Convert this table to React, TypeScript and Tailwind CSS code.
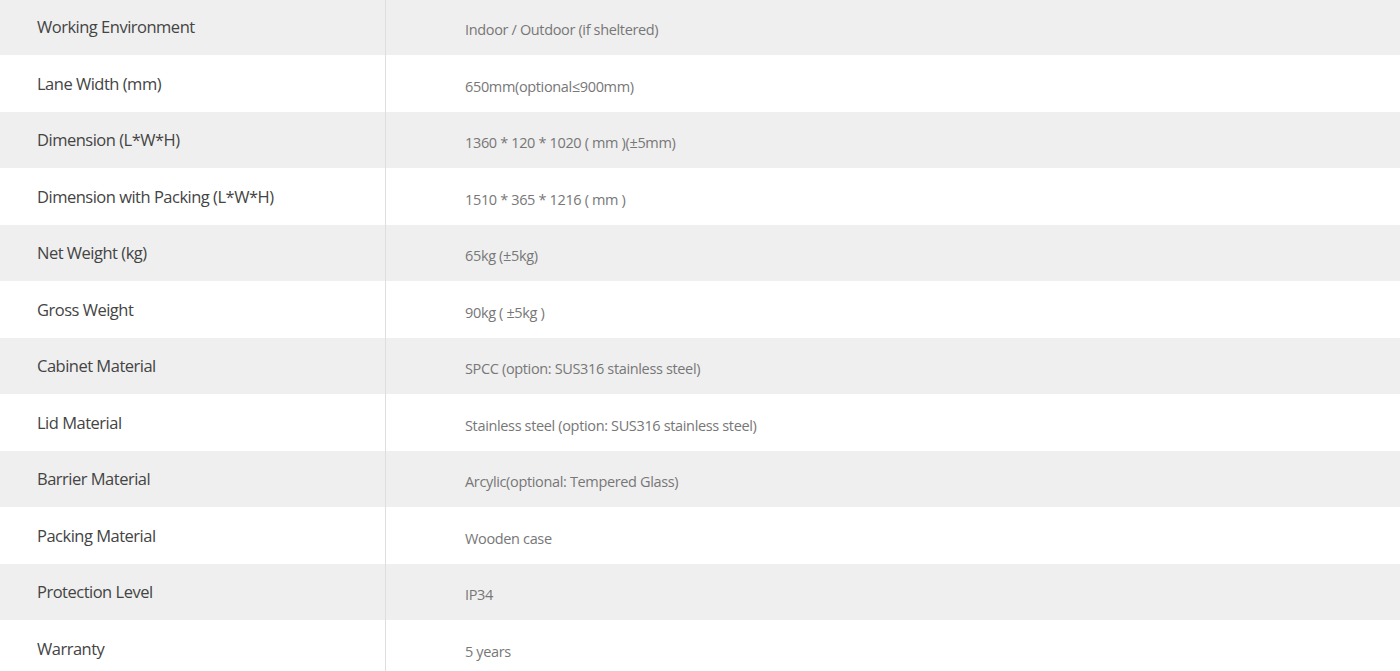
const specs = [
  ['Working Environment', 'Indoor / Outdoor (if sheltered)'],
  ['Lane Width (mm)', '650mm(optional≤900mm)'],
  ['Dimension (L*W*H)', '1360 * 120 * 1020 ( mm )(±5mm)'],
  ['Dimension with Packing (L*W*H)', '1510 * 365 * 1216 ( mm )'],
  ['Net Weight (kg)', '65kg (±5kg)'],
  ['Gross Weight', '90kg ( ±5kg )'],
  ['Cabinet Material', 'SPCC (option: SUS316 stainless steel)'],
  ['Lid Material', 'Stainless steel (option: SUS316 stainless steel)'],
  ['Barrier Material', 'Arcylic(optional: Tempered Glass)'],
  ['Packing Material', 'Wooden case'],
  ['Protection Level', 'IP34'],
  ['Warranty', '5 years'],
]

export default function App() {
  return (
    <div className="h-[671px] overflow-hidden bg-white font-['Open_Sans',sans-serif]">
      <div className="-mt-[1.5px]">
        {specs.map(([label, value], i) => (
          <div
            key={label}
            className={`flex h-[56.5px] ${i % 2 === 0 ? 'bg-[#efefef]' : 'bg-white'}`}
          >
            <div className="flex w-[386px] shrink-0 items-center border-r border-[#dedede] pl-[37px] pt-[2px] text-[16.5px] tracking-[-0.5px] text-[#444]">
              {label}
            </div>
            <div className="flex flex-1 items-center pl-[79px] pt-[7px] text-[14.5px] tracking-[-0.35px] text-[#777]">
              {value}
            </div>
          </div>
        ))}
      </div>
    </div>
  )
}
